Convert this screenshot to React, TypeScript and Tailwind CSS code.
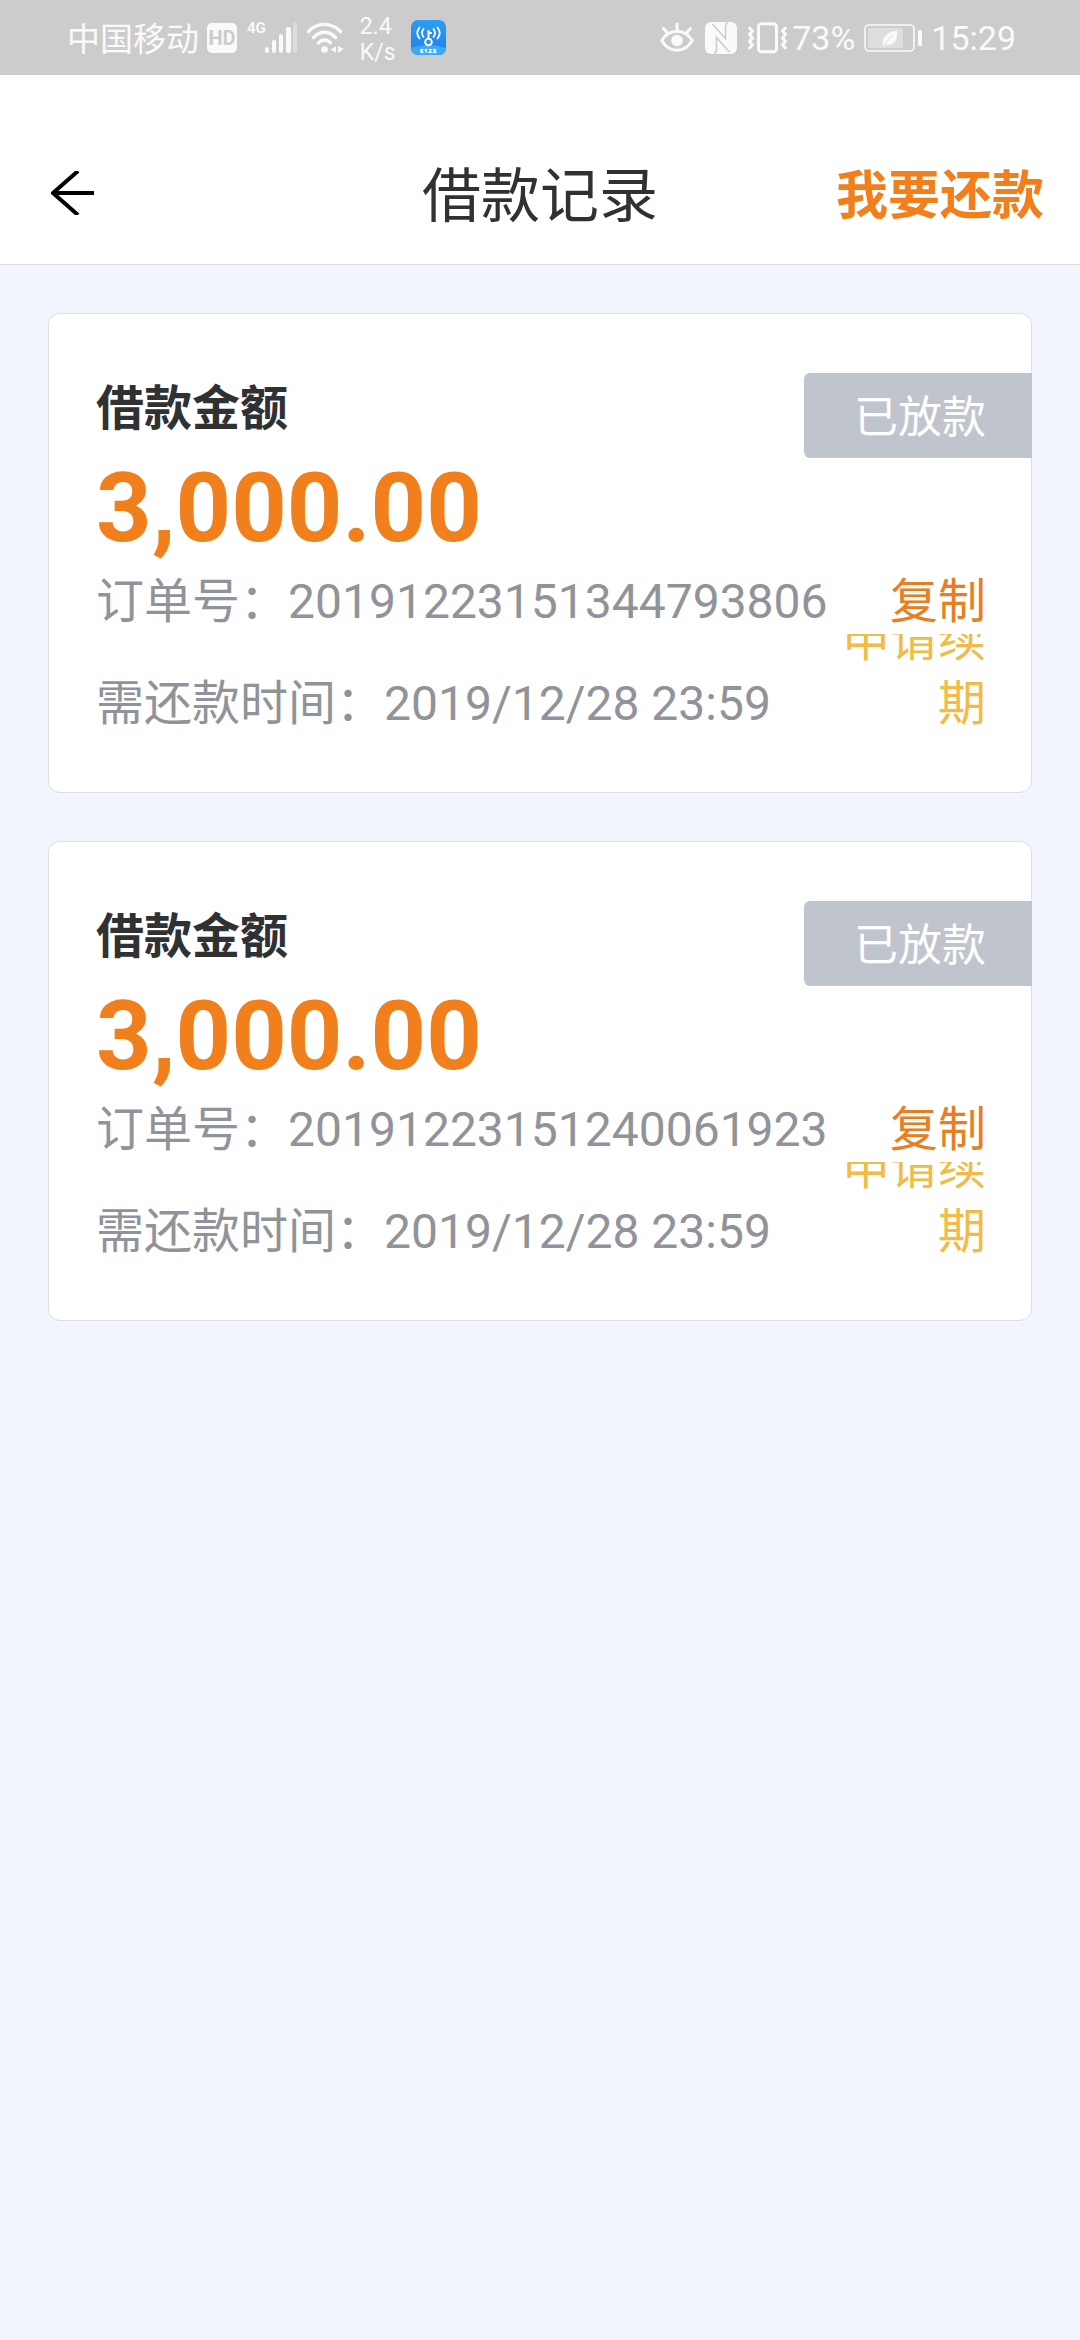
type Loan = { orderNo: string; amount: string; due: string };

const loans: Loan[] = [
  { orderNo: "20191223151344793806", amount: "3,000.00", due: "2019/12/28 23:59" },
  { orderNo: "20191223151240061923", amount: "3,000.00", due: "2019/12/28 23:59" },
];

function SignalIcon() {
  return (
    <svg className="-ml-px h-[31px] w-[33px]" viewBox="0 0 33 31" fill="currentColor" aria-hidden="true">
      <rect x="0" y="25" width="4" height="6" rx="2" />
      <rect x="7" y="18" width="4" height="13" rx="2" />
      <rect x="14" y="12" width="4" height="19" rx="2" />
      <rect x="21" y="5" width="5" height="26" rx="2" />
      <rect x="28" y="0" width="4" height="31" rx="2" opacity="0.35" />
    </svg>
  );
}

function WifiIcon() {
  return (
    <svg className="ml-2 h-[32px] w-[38px]" viewBox="0 0 38 32" fill="none" stroke="currentColor" strokeWidth="3.4" strokeLinecap="round" aria-hidden="true">
      <path d="M2.5 9.5C11.5 0 25.500 0 34.500 9.500" />
      <path d="M7.500 15.500C14 8.500 23 8.500 29.500 15.500" />
      <path d="M12.500 21C16 17 21 17 24.500 21" />
      <circle cx="18.500" cy="27.500" r="3.300" fill="currentColor" stroke="none" />
      <path d="M24.500 27.500 30 24.500V30.500Z" fill="currentColor" stroke="none" />
      <path d="M37.500 27 32 24V31Z" fill="currentColor" stroke="none" />
    </svg>
  );
}

function HotspotAppIcon() {
  return (
    <svg className="ml-[15px] h-[35px] w-[35px]" viewBox="0 0 35 35" fill="none" stroke="#fff" strokeLinecap="round" aria-hidden="true">
      <defs>
        <linearGradient id="hotspot" x1="0" y1="0" x2="0" y2="1">
          <stop offset="0" stopColor="#2f9cf5" />
          <stop offset="1" stopColor="#1b80ea" />
        </linearGradient>
        <clipPath id="hotspotTile">
          <rect width="35" height="35" rx="7" />
        </clipPath>
      </defs>
      <rect width="35" height="35" rx="7" fill="url(#hotspot)" stroke="none" />
      <path d="M0 28Q17.500 22 35 28V35H0Z" fill="#37aaf8" stroke="none" clipPath="url(#hotspotTile)" />
      <circle cx="17.500" cy="22" r="3.300" strokeWidth="2" />
      <path d="M17.500 18V11M17.500 13H20" strokeWidth="2" />
      <path d="M12.500 9Q9.500 13 12.500 17M22.500 9Q25.500 13 22.500 17" strokeWidth="1.800" />
      <path d="M8.500 7.500Q4 13 8.500 18.500M26.500 7.500Q31 13 26.500 18.500" strokeWidth="1.800" />
      <path d="M10 29V32.500M10 31 12 29.500M10.500 31 12 32.500M14 30H16M15 29V32.500M18 29.500H20.500L18 32.500H21M23 29V32.500M23 31 25 29.500M23.500 31 25 32.500" strokeWidth="1.200" />
    </svg>
  );
}

function EyeIcon() {
  return (
    <svg className="h-[31px] w-[34px]" viewBox="0 0 34 31" fill="none" stroke="currentColor" strokeWidth="3" strokeLinecap="round" aria-hidden="true">
      <path d="M1.800 18.500C9 6 25 6 32.200 18.500C25 31.500 9 31.500 1.800 18.500Z" />
      <circle cx="17" cy="18.500" r="5.800" fill="currentColor" stroke="none" />
      <path d="M17 8V2M7 10.500 3.500 6.500M27 10.500 30.500 6.500" />
    </svg>
  );
}

function NfcIcon() {
  return (
    <svg className="ml-[11px] h-[32px] w-[32px]" viewBox="0 0 32 32" fill="currentColor" aria-hidden="true">
      <rect width="32" height="32" rx="6" />
      <path d="M7.500 2 20.500 16.500V5Q20.500 2.500 22.500 0" fill="none" stroke="#ccc" strokeWidth="1.600" />
      <path d="M24.500 30 11.500 15.500V27Q11.500 29.500 9.500 32" fill="none" stroke="#ccc" strokeWidth="1.600" />
    </svg>
  );
}

function VibrateIcon() {
  return (
    <svg className="ml-[10px] h-[32px] w-[41px]" viewBox="0 0 41 32" fill="none" stroke="currentColor" strokeWidth="3" strokeLinecap="round" strokeLinejoin="round" aria-hidden="true">
      <rect x="11.500" y="1.800" width="18" height="28" rx="3" />
      <path d="M2.500 6 5.500 9 2.500 12.500 5.500 16 2.500 19.500 5.500 23 2.500 26" />
      <path d="M38.500 6 35.500 9 38.500 12.500 35.500 16 38.500 19.500 35.500 23 38.500 26" />
    </svg>
  );
}

function BatteryIcon() {
  return (
    <svg className="ml-[9px] h-[28px] w-[59px]" viewBox="0 0 59 28" fill="none" aria-hidden="true">
      <rect x="1" y="1" width="49" height="26" rx="4" stroke="currentColor" strokeWidth="1.600" />
      <rect x="4" y="4" width="35" height="20" rx="1" fill="#dedede" />
      <path d="M19 22C17 13 23 8 33 6.500C34 14 31 22 21.500 21L19.500 22.500Z" fill="currentColor" />
      <path d="M20 21.500Q23 15.500 29 11.500" stroke="#dedede" strokeWidth="1" />
      <rect x="54" y="6" width="4" height="16" rx="1.500" fill="currentColor" />
    </svg>
  );
}

function StatusBar() {
  return (
    <div className="flex h-[75px] items-center justify-between bg-[#cccccc] pr-16 pl-[67px] text-[#fafafa]">
      <div className="flex items-center">
        <span className="pt-1 text-[33px] leading-10">中国移动</span>
        <span className="ml-2 flex h-[30px] w-[30px] items-center justify-center rounded-[5px] bg-[#fafafa] text-[20px] leading-none font-bold text-[#cccccc]">
          HD
        </span>
        <span className="ml-[10px] mb-[18px] text-[15px] leading-none font-bold">4G</span>
        <SignalIcon />
        <WifiIcon />
        <span className="ml-4 pt-1 text-[23px] leading-[26px]">
          2.4
          <br />
          K/s
        </span>
        <HotspotAppIcon />
      </div>
      <div className="flex items-center">
        <EyeIcon />
        <NfcIcon />
        <VibrateIcon />
        <span className="ml-1 text-[34px] leading-10">73%</span>
        <BatteryIcon />
        <span className="ml-2 text-[34px] leading-10">15:29</span>
      </div>
    </div>
  );
}

function Header() {
  return (
    <header className="grid grid-cols-[1fr_auto_1fr] items-center border-b border-[#dcdcdc] bg-white px-9 pt-[78px] pb-[23px]">
      <button type="button" aria-label="返回" className="justify-self-start px-3 pb-2">
        <svg className="h-[44px] w-[48px]" viewBox="0 0 48 44" fill="none" stroke="#000" strokeWidth="4" aria-hidden="true">
          <path d="M4 22H46" />
          <path d="M30 0 5 22 30 44" strokeLinejoin="round" />
        </svg>
      </button>
      <h1 className="text-[59px] leading-[88px] text-[#303133]">借款记录</h1>
      <button type="button" className="justify-self-end text-[52px] leading-[88px] font-bold text-[#f07f1c]">
        我要还款
      </button>
    </header>
  );
}

function LoanCard({ loan }: { loan: Loan }) {
  return (
    <article className="relative rounded-xl border border-[#dcdfe6] bg-white pt-[63px] pr-[45px] pb-[56px] pl-[47px] text-[48px] leading-[64px] text-[#909399]">
      <span className="absolute top-[59px] -right-px rounded-l-md bg-[#c0c4cc] pt-[6px] pr-[46px] pl-[50px] text-[44px] leading-[79px] text-white">
        已放款
      </span>
      <h2 className="font-bold text-[#303133]">借款金额</h2>
      <p className="pt-[5px] text-[97px] leading-[124px] font-bold text-[#f07f1c]">{loan.amount}</p>
      <div className="flex justify-between">
        <span>订单号：{loan.orderNo}</span>
        <button type="button" className="text-[#e67e22]">
          复制
        </button>
      </div>
      <div className="flex h-[102px] items-end justify-between">
        <span>需还款时间：{loan.due}</span>
        <button type="button" className="flex h-full w-[144px] flex-col justify-end overflow-hidden text-right text-[#f1bb46]">
          <span>申请续期</span>
        </button>
      </div>
    </article>
  );
}

export default function App() {
  return (
    <div className="min-h-screen bg-[#f2f5fd] font-['Roboto','Noto_Sans_CJK_SC',sans-serif]" lang="zh-CN">
      <StatusBar />
      <Header />
      <main className="flex flex-col gap-12 p-12">
        {loans.map((loan) => (
          <LoanCard key={loan.orderNo} loan={loan} />
        ))}
      </main>
    </div>
  );
}
